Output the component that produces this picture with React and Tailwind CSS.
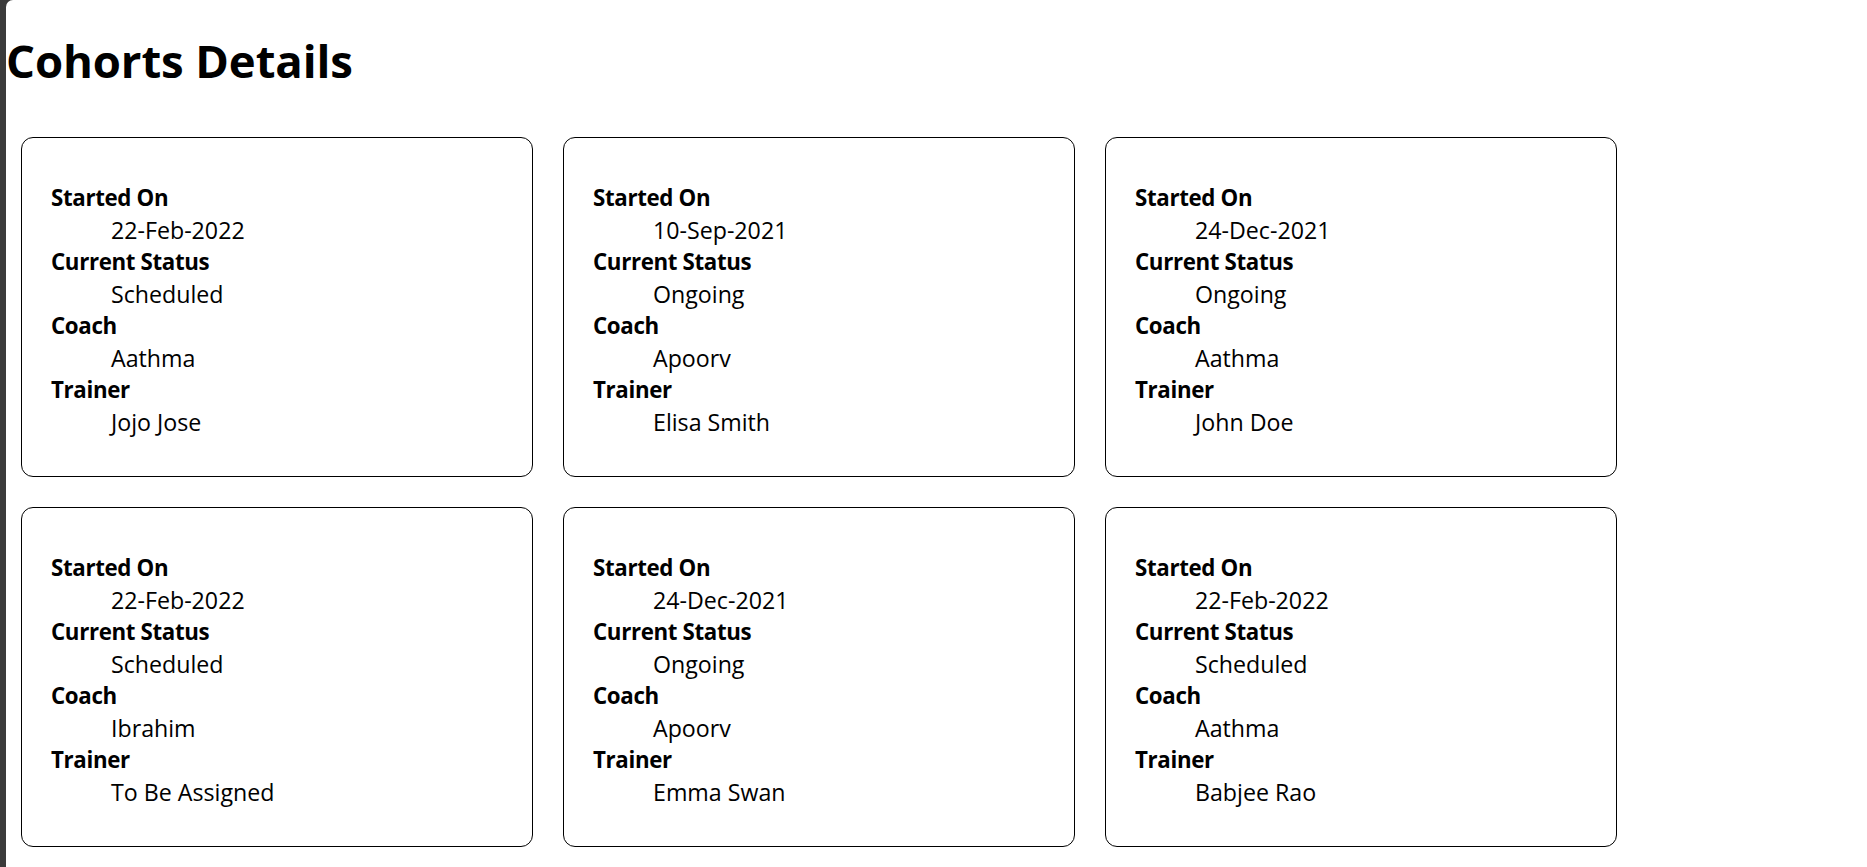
import React from "react";

const cohorts = [
  { started: "22-Feb-2022", status: "Scheduled", coach: "Aathma", trainer: "Jojo Jose" },
  { started: "10-Sep-2021", status: "Ongoing", coach: "Apoorv", trainer: "Elisa Smith" },
  { started: "24-Dec-2021", status: "Ongoing", coach: "Aathma", trainer: "John Doe" },
  { started: "22-Feb-2022", status: "Scheduled", coach: "Ibrahim", trainer: "To Be Assigned" },
  { started: "24-Dec-2021", status: "Ongoing", coach: "Apoorv", trainer: "Emma Swan" },
  { started: "22-Feb-2022", status: "Scheduled", coach: "Aathma", trainer: "Babjee Rao" },
];

function Row({ label, value }) {
  return (
    <>
      <dt className="text-[22.3px] font-bold tracking-[-0.35px]">{label}</dt>
      <dd className="pl-[60px] text-[23.2px]">{value}</dd>
    </>
  );
}

function Card({ c }) {
  return (
    <div className="h-[340px] w-[512px] rounded-[12px] border border-black pl-[29px] pt-[44px]">
      <dl className="leading-[32px] text-black">
        <Row label="Started On" value={c.started} />
        <Row label="Current Status" value={c.status} />
        <Row label="Coach" value={c.coach} />
        <Row label="Trainer" value={c.trainer} />
      </dl>
    </div>
  );
}

export default function App() {
  return (
    <div className="flex min-h-[867px] bg-[#3b3b3b] pl-[6px]">
      <div
        className="min-h-[867px] flex-1 rounded-tl-[7px] bg-white pt-[28px] text-black"
        style={{ fontFamily: '"Open Sans", "Noto Sans", sans-serif' }}
      >
        <h1 className="m-0 h-[64px] text-[45.5px] font-bold leading-[64px] tracking-[-0.1px]">Cohorts Details</h1>
        <div className="ml-[15px] mt-[45px] grid grid-cols-[repeat(3,512px)] gap-[30px]">
          {cohorts.map((c, i) => (
            <Card key={i} c={c} />
          ))}
        </div>
      </div>
    </div>
  );
}
